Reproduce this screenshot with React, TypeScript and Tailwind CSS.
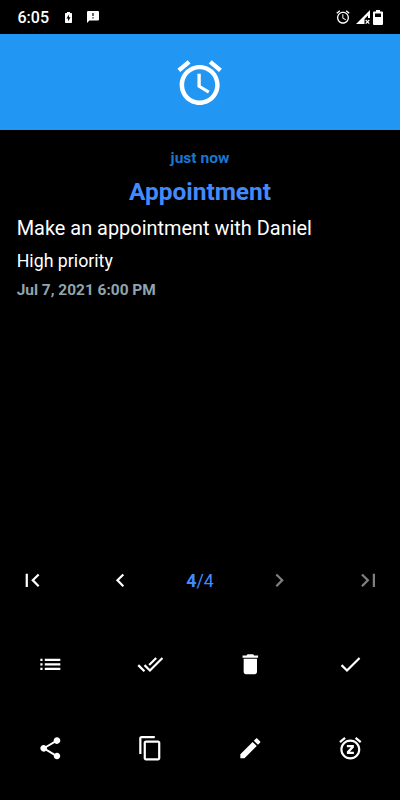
import type { ReactNode } from "react"

const ALARM =
  "M22 5.72l-4.6-3.86-1.29 1.53 4.6 3.86L22 5.72zM7.88 3.39L6.6 1.86 2 5.71l1.29 1.53 4.59-3.85zM12.5 8H11v6l4.75 2.85.75-1.23-4-2.37V8zM12 4c-4.97 0-9 4.03-9 9s4.02 9 9 9c4.97 0 9-4.03 9-9s-4.03-9-9-9zm0 16c-3.87 0-7-3.13-7-7s3.13-7 7-7 7 3.13 7 7-3.13 7-7 7z"

const actions = [
  {
    label: "List",
    path: "M3 13h2v-2H3v2zm0 4h2v-2H3v2zm0-8h2V7H3v2zm4 4h14v-2H7v2zm0 4h14v-2H7v2zM7 7v2h14V7H7z",
  },
  {
    label: "Done all",
    path: "M18 7l-1.41-1.41-6.34 6.34 1.41 1.41L18 7zm4.24-1.41L11.66 16.17 7.48 12l-1.41 1.41L11.66 19l12-12-1.42-1.41zM.41 13.41L6 19l1.41-1.41L1.83 12 .41 13.41z",
  },
  {
    label: "Delete",
    path: "M6 19c0 1.1.9 2 2 2h8c1.1 0 2-.9 2-2V7H6v12zM19 4h-3.5l-1-1h-5l-1 1H5v2h14V4z",
  },
  { label: "Done", path: "M9 16.2L4.8 12l-1.4 1.4L9 19 21 7l-1.4-1.4L9 16.2z" },
  {
    label: "Share",
    path: "M18 16.08c-.76 0-1.44.3-1.96.77L8.91 12.7c.05-.23.09-.46.09-.7s-.04-.47-.09-.7l7.05-4.11c.54.5 1.25.81 2.04.81 1.66 0 3-1.34 3-3s-1.34-3-3-3-3 1.34-3 3c0 .24.04.47.09.7L8.04 9.81C7.5 9.31 6.79 9 6 9c-1.66 0-3 1.34-3 3s1.34 3 3 3c.79 0 1.5-.31 2.04-.81l7.12 4.16c-.05.21-.08.43-.08.65 0 1.61 1.31 2.92 2.92 2.92s2.92-1.31 2.92-2.92-1.31-2.92-2.92-2.92z",
  },
  {
    label: "Copy",
    path: "M16 1H4c-1.1 0-2 .9-2 2v14h2V3h12V1zm3 4H8c-1.1 0-2 .9-2 2v14c0 1.1.9 2 2 2h11c1.1 0 2-.9 2-2V7c0-1.1-.9-2-2-2zm0 16H8V7h11v14z",
  },
  {
    label: "Edit",
    path: "M3 17.25V21h3.75L17.81 9.94l-3.75-3.75L3 17.25zM20.71 7.04c.39-.39.39-1.02 0-1.41l-2.34-2.34c-.39-.39-1.02-.39-1.41 0l-1.83 1.83 3.75 3.75 1.83-1.83z",
  },
  {
    label: "Snooze",
    path: "M7.88 3.39L6.6 1.86 2 5.71l1.29 1.53 4.59-3.85zM22 5.72l-4.6-3.86-1.29 1.53 4.6 3.86L22 5.72zM12 4c-4.97 0-9 4.03-9 9s4.02 9 9 9c4.97 0 9-4.03 9-9s-4.03-9-9-9zm0 16c-3.87 0-7-3.13-7-7s3.13-7 7-7 7 3.13 7 7-3.13 7-7 7zM8.9 9h6.3v2.2l-3.600 3.800h3.600v2H8.900v-2.200l3.600-3.800H8.900z",
  },
]

function Icon({ d, className = "size-[26.67px]" }: { d: string; className?: string }) {
  return (
    <svg viewBox="0 0 24 24" fill="currentColor" fillRule="evenodd" className={`shrink-0 ${className}`}>
      <path d={d} />
    </svg>
  )
}

function NavButton({ label, children, disabled }: { label: string; children: ReactNode; disabled?: boolean }) {
  return (
    <button aria-label={label} disabled={disabled} className={disabled ? "text-[#808080]" : "text-white"}>
      {children}
    </button>
  )
}

function StatusBar() {
  return (
    <div className="flex h-[34px] items-center pr-[17px] pl-[17.5px] text-white">
      <span className="w-[47.5px] pt-px text-[16px] leading-[33px] font-medium">6:05</span>
      {/* battery saver */}
      <svg viewBox="0 0 7 11" className="h-[11px] w-[7px] fill-white">
        <path fillRule="evenodd" d="M2 0h3v1h1.3q.7 0 .7.7v8.6q0 .7-.7.7H.7Q0 11 0 10.3V1.7Q0 1 .7 1H2zM3.9 2.5 1.5 6.6h1.6v2.9l2.4-4.3H3.9z" />
      </svg>
      {/* feedback */}
      <svg viewBox="0 0 12 12" className="ml-[15px] h-[12px] w-[12px] fill-white">
        <path fillRule="evenodd" d="M1 0h10q1 0 1 1v7.5q0 1-1 1H2.4L0 12V1q0-1 1-1zM5.4 2v3.1h1.2V2zm0 4.2v1.2h1.2V6.2z" />
      </svg>
      <div className="flex-1" />
      <Icon d={ALARM} className="size-[16px]" />
      {/* mobile signal, no data */}
      <svg viewBox="0 0 14 14" className="ml-[5px] size-[14px] fill-white">
        <path d="M0 14 14 0v8h-2V5.5L8.5 9v5z" />
        <path d="m9.7 10 3.6 3.6m0-3.6-3.6 3.6" stroke="white" strokeWidth="1.2" />
      </svg>
      <svg viewBox="0 0 10 15" className="ml-[3px] h-[15px] w-[10px] fill-white">
        <path fillRule="evenodd" d="M3 0h4v1.5h2q1 0 1 1V14q0 1-1 1H1q-1 0-1-1V2.5q0-1 1-1h2zM2 3.5V7h6V3.5z" />
      </svg>
    </div>
  )
}

export default function App() {
  return (
    <div className="flex h-[800px] w-[400px] flex-col overflow-hidden bg-black font-['Roboto',sans-serif] text-white">
      <StatusBar />

      {/* Header */}
      <div className="flex h-[96px] items-center justify-center bg-[#2196f3] pt-px">
        <Icon d={ALARM} className="size-[53.33px]" />
      </div>

      {/* Reminder */}
      <div className="flex flex-1 flex-col px-[16.67px] pt-[18px]">
        <p className="text-center text-[15.56px] leading-[20px] font-bold text-[#1976d2]">just now</p>
        <h1 className="mt-[8px] text-center text-[24.44px] leading-[32px] font-bold text-[#448aff]">Appointment</h1>
        <p className="mt-[9px] text-[19.93px] leading-[24px]">Make an appointment with Daniel</p>
        <p className="mt-[8px] text-[17.78px] leading-[24px]">High priority</p>
        <p className="mt-[7px] text-[15.45px] leading-[20px] font-bold text-[#90a4ae]">Jul 7, 2021 6:00 PM</p>
      </div>

      {/* Pager */}
      <div className="flex h-[84px] items-center justify-between px-[18.67px]">
        <NavButton label="First">
          <Icon d="M18.41 16.59L13.82 12l4.59-4.59L17 6l-6 6 6 6zM6 6h2v12H6z" />
        </NavButton>
        <div className="flex w-[186px] items-center justify-between">
          <NavButton label="Previous">
            <Icon d="M15.41 7.41L14 6l-6 6 6 6 1.41-1.41L10.83 12z" />
          </NavButton>
          <span className="pt-px text-[17.78px] leading-[24px] text-[#448aff]">
            <b>4</b>/4
          </span>
          <NavButton label="Next" disabled>
            <Icon d="M10 6L8.59 7.41 13.17 12l-4.58 4.59L10 18l6-6z" />
          </NavButton>
        </div>
        <NavButton label="Last" disabled>
          <Icon d="M5.59 7.41L10.18 12l-4.59 4.59L7 18l6-6-6-6zM16 6h2v12h-2z" />
        </NavButton>
      </div>

      {/* Actions */}
      <div className="grid h-[178px] grid-cols-4 grid-rows-[84px_85px]">
        {actions.map((action) => (
          <button key={action.label} aria-label={action.label} className="flex items-center justify-center">
            <Icon d={action.path} />
          </button>
        ))}
      </div>
    </div>
  )
}
